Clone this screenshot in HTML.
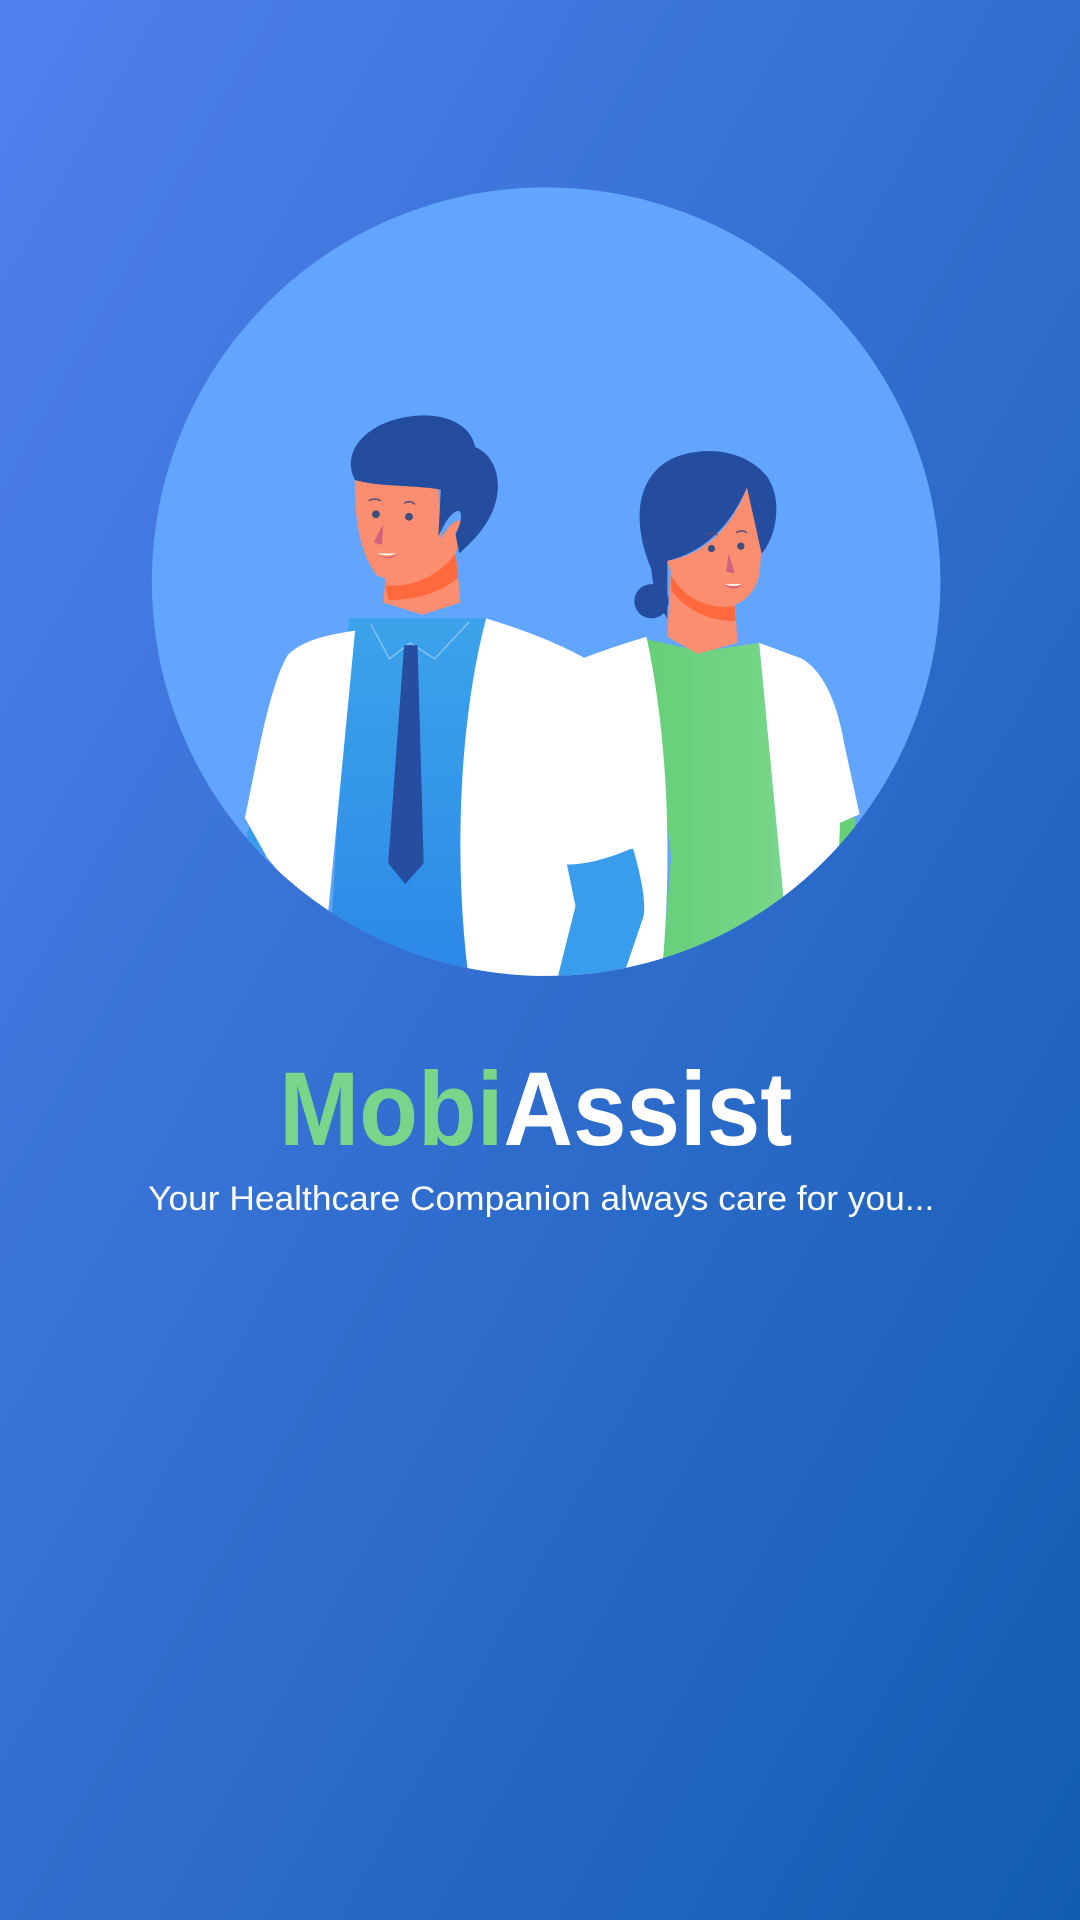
<!DOCTYPE html>
<html><head><meta charset="utf-8"><style>html,body{margin:0;padding:0;width:1080px;height:1920px;overflow:hidden}svg{display:block}</style></head><body>
<svg width="1080" height="1920" viewBox="0 0 882 1568" xmlns="http://www.w3.org/2000/svg">
<defs>
<linearGradient id="bg" x1="0" y1="0" x2="1" y2="1"><stop offset="0" stop-color="#5080EE"/><stop offset="1" stop-color="#125CB0"/></linearGradient>
<linearGradient id="sh" x1="0" y1="0" x2="0" y2="1"><stop offset="0" stop-color="#3CA3EA"/><stop offset="1" stop-color="#2C88E8"/></linearGradient>
<linearGradient id="gr" x1="0" y1="0" x2="1" y2="0"><stop offset="0" stop-color="#66CF78"/><stop offset="1" stop-color="#78D68A"/></linearGradient>
<clipPath id="c"><circle cx="446" cy="475" r="322"/></clipPath>
</defs>
<rect width="882" height="1568" fill="url(#bg)"/>
<circle cx="446" cy="475" r="322" fill="#61A5FF"/>
<g clip-path="url(#c)">
<!-- man -->
<polygon points="205,668 220,672 216,702 200,690" fill="#3A9DEB"/>
<polygon points="285,505 400,505 400,800 268,800" fill="url(#sh)"/>
<path d="M290,515 L268,745 L242,730 L218,700 L200,668 C210,620 220,560 235,535 C248,522 270,518 290,515Z" fill="#fff"/>
<path d="M397,505 C430,515 460,527 482,540 L492,800 L383,800 C372,720 372,600 397,505Z" fill="#fff"/>
<polygon points="315,470 372,450 376,492 345,502 313,492" fill="#FB8E70"/>
<path d="M315,478 C340,480 360,468 372,452 L374,472 C360,484 340,490 317,490Z" fill="#FF6A3D"/>
<path d="M303,510 L318,538 L335,525 L355,538 L383,508" stroke="#8CC8F5" stroke-width="1" fill="none"/>
<polygon points="330,527 341,527 346,705 331,722 317,705" fill="#264DA0"/>
<path d="M290,390 L358,398 L360,440 C368,425 380,418 378,435 L372,452 C355,472 330,480 308,470 C296,455 289,430 290,390Z" fill="#FB8E70"/>
<path d="M290,392 C278,370 298,345 335,340 C365,336 385,348 388,365 C405,372 412,395 402,418 C396,432 386,442 375,452 L372,436 C378,426 378,414 372,418 C366,421 362,430 358,438 L360,400 C340,396 310,398 290,392Z" fill="#244DA0"/>
<circle cx="307" cy="420" r="3.2" fill="#3E4E7A"/><circle cx="334" cy="422" r="3.2" fill="#3E4E7A"/>
<path d="M301,409 q5,-3 10,0 M330,411 q5,-3 9,1" stroke="#5A4E7A" stroke-width="1.2" fill="none"/>
<path d="M313,428 L305,443 L312,445Z" fill="#D0637A"/>
<path d="M307,452 q8,6 18,0 q-8,8 -18,0Z" fill="#D0637A"/><path d="M308,452 h16 q-8,3 -16,0Z" fill="#fff"/>
<!-- woman -->
<polygon points="683,670 699,668 696,690 686,700" fill="#66CF78"/>
<path d="M528,522 L572,532 L620,525 L640,730 L640,800 L540,800 L548,700Z" fill="url(#gr)"/>
<path d="M620,525 L655,538 C675,550 685,580 690,610 L702,665 L686,672 L685,700 L640,735Z" fill="#fff"/>
<path d="M470,540 C495,530 512,525 528,520 C545,600 550,700 540,800 L500,800 L522,745 C520,720 518,705 515,693 C500,700 480,706 463,706 L470,560Z" fill="#fff"/>
<path d="M463,706 C480,706 500,700 517,693 C525,720 528,742 525,750 L508,800 L455,800 L470,740Z" fill="#3A9DEB"/>
<polygon points="548,462 600,478 602,525 570,534 545,520" fill="#FB8E70"/>
<path d="M548,470 C560,490 580,498 600,495 L601,507 C580,508 560,498 548,482Z" fill="#FF6A3D"/>
<circle cx="532" cy="491" r="14" fill="#244DA0"/>
<path d="M545,458 C580,452 600,425 610,398 C620,410 624,440 620,470 C615,490 600,497 585,495 C565,492 550,480 545,458Z" fill="#FB8E70"/>
<path d="M532,465 C515,425 520,388 550,374 C580,362 612,370 627,390 C640,410 633,440 622,452 L610,398 C600,422 580,450 545,458 L545,505 C538,495 533,480 532,465Z" fill="#244DA0"/>
<circle cx="581" cy="448" r="3" fill="#3E4E7A"/><circle cx="605" cy="446" r="3" fill="#3E4E7A"/>
<path d="M577,437 q5,-3 9,0 M601,435 q5,-3 9,0" stroke="#5A4E7A" stroke-width="1.2" fill="none"/>
<path d="M595,452 L600,468 L593,467Z" fill="#D0637A"/>
<path d="M591,477 q8,4 16,0 q-8,7 -16,0Z" fill="#D0637A"/><path d="M592,477 h14 q-7,3 -14,0Z" fill="#fff"/>
</g>
<text x="228" y="935" font-family="Liberation Sans, sans-serif" font-weight="bold" font-size="86" textLength="419" lengthAdjust="spacingAndGlyphs"><tspan fill="#77D68A">Mobi</tspan><tspan fill="#fff">Assist</tspan></text>
<text x="121" y="988" font-family="Liberation Sans, sans-serif" font-size="28" fill="#fff" textLength="642" lengthAdjust="spacingAndGlyphs">Your Healthcare Companion always care for you...</text>
</svg>
</body></html>
